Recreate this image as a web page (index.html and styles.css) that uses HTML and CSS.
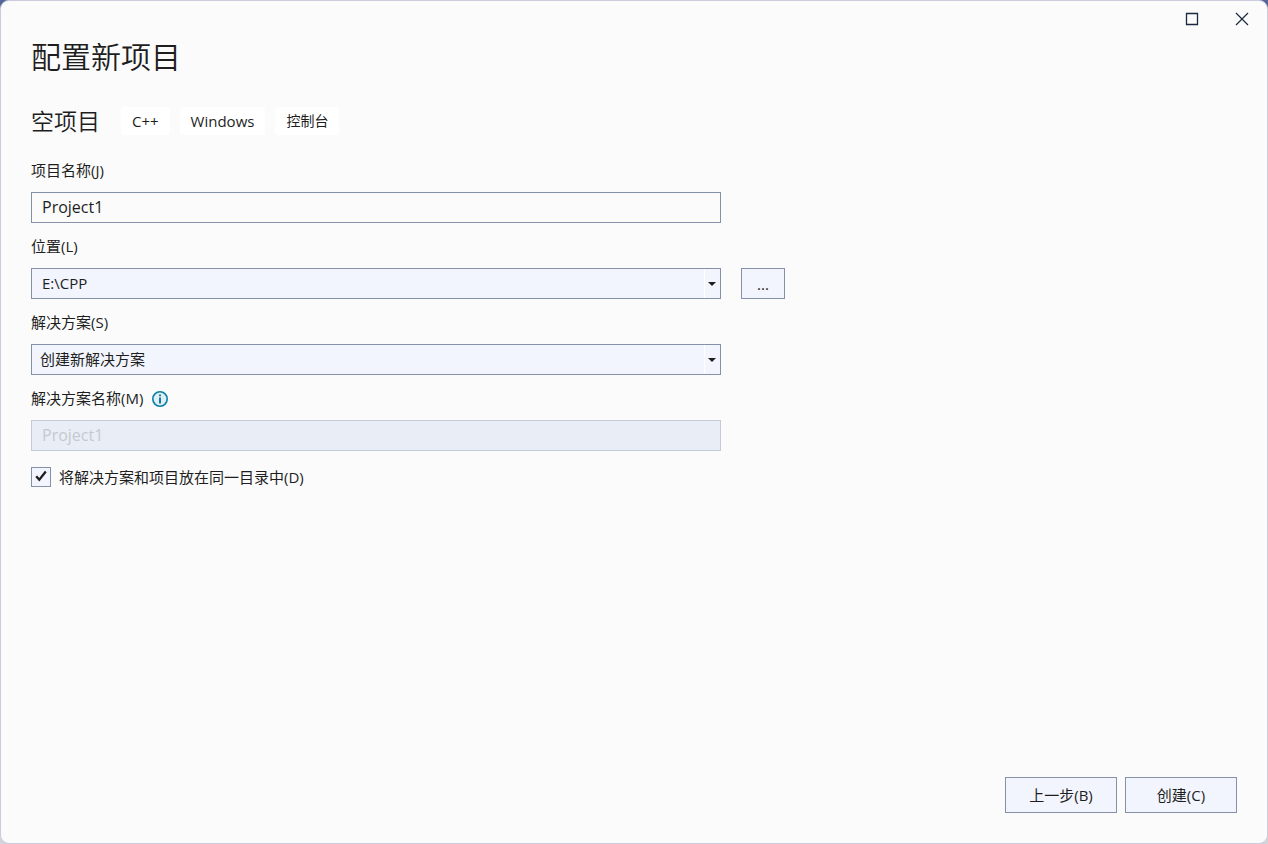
FILE: index.html
```html
<!DOCTYPE html>
<html lang="zh-CN">
<head>
    <meta charset="UTF-8">
    <meta name="viewport" content="width=device-width, initial-scale=1.0">
    <title>配置新项目</title>
    <link rel="stylesheet" href="styles.css">
</head>
<body>

    <div class="window">
        <!-- Window buttons -->
        <div class="title-bar">
            <button class="window-button" type="button" aria-label="最大化">
                <svg width="14" height="14" viewBox="0 0 14 14"><path d="M1.5 1.5h11v11h-11z" fill="none" stroke="#1b2a41" stroke-width="1.3"/></svg>
            </button>
            <button class="window-button" type="button" aria-label="关闭">
                <svg width="14" height="14" viewBox="0 0 14 14"><path d="M1 1l12 12M13 1L1 13" fill="none" stroke="#1b2a41" stroke-width="1.2"/></svg>
            </button>
        </div>

        <form class="content">
            <h1>配置新项目</h1>

            <div class="template">
                <h2>空项目</h2>
                <ul class="tags">
                    <li>C++</li>
                    <li>Windows</li>
                    <li class="tag-cjk">控制台</li>
                </ul>
            </div>

            <div class="field">
                <label for="projectName">项目名称(J)</label>
                <input class="box" type="text" id="projectName" value="Project1">
            </div>

            <div class="field">
                <label for="location">位置(L)</label>
                <div class="field-row">
                    <div class="combo">
                        <select class="box" id="location">
                            <option>E:\CPP</option>
                        </select>
                        <svg class="arrow" width="8" height="4" viewBox="0 0 8 4"><path d="M0 0h8L4 4z" fill="#1e1e1e"/></svg>
                    </div>
                    <button class="browse" type="button">...</button>
                </div>
            </div>

            <div class="field">
                <label for="solution">解决方案(S)</label>
                <div class="combo">
                    <select class="box solution-select" id="solution">
                        <option>创建新解决方案</option>
                    </select>
                    <svg class="arrow" width="8" height="4" viewBox="0 0 8 4"><path d="M0 0h8L4 4z" fill="#1e1e1e"/></svg>
                </div>
            </div>

            <div class="field">
                <div class="label-row">
                    <label for="solutionName">解决方案名称(M)</label>
                    <svg width="16" height="16" viewBox="0 0 16 16">
                        <circle cx="8" cy="8" r="7.2" fill="#e2eef3" stroke="#0a7ea4" stroke-width="1.6"/>
                        <path d="M7 3.5h2v1.8H7zM7 6.5h2v6H7z" fill="#0a7ea4"/>
                    </svg>
                </div>
                <input class="box" type="text" id="solutionName" value="Project1" disabled>
            </div>

            <div class="check-row">
                <span class="check">
                    <input type="checkbox" id="sameDirectory" checked>
                    <svg width="12" height="12" viewBox="0 0 12 12"><path d="M1.2 6.2l3.1 3.6L10.8 1.5" fill="none" stroke="#1e1e1e" stroke-width="2.3"/></svg>
                </span>
                <label for="sameDirectory">将解决方案和项目放在同一目录中(D)</label>
            </div>

            <div class="actions">
                <button type="button">上一步(B)</button>
                <button type="submit">创建(C)</button>
            </div>
        </form>
    </div>

</body>
</html>
```

FILE: styles.css
```css
* {
    margin: 0;
    padding: 0;
    box-sizing: border-box;
}

body {
    background: linear-gradient(#56669a 50%, #d4d4da 50%);
    color: #1e1e1e;
    font-family: "Open Sans", "Noto Sans CJK SC", sans-serif;
    font-size: 15px;
    line-height: 20px;
}

button, input, select {
    font: inherit;
    color: inherit;
}

.window {
    display: flex;
    flex-direction: column;
    min-height: 100vh;
    background: #fbfbfb;
    border: 1px solid #ccccdd;
    border-radius: 9px;
}

/* Window buttons */
.title-bar {
    display: flex;
    justify-content: flex-end;
    height: 36px;
}

.window-button {
    display: flex;
    align-items: center;
    justify-content: center;
    width: 50px;
    height: 36px;
    background: none;
    border: none;
}

.content {
    flex: 1;
    display: flex;
    flex-direction: column;
    padding: 0 30px 30px;
}

h1 {
    font-size: 30px;
    font-weight: 350;
    line-height: 40px;
}

.template {
    display: flex;
    align-items: center;
    gap: 21px;
    margin-top: 29px;
    margin-bottom: 25px;
}

h2 {
    font-size: 23px;
    font-weight: 350;
    line-height: 30px;
}

.tags {
    display: flex;
    gap: 10px;
    list-style: none;
}

.tags li {
    padding: 4px 11px;
    background: #fff;
    border-radius: 4px;
}

.tags .tag-cjk {
    font-size: 14px;
}

/* Form fields */
.field {
    display: flex;
    flex-direction: column;
    gap: 12px;
    margin-bottom: 14px;
    width: 100%;
    max-width: 690px;
}

.field-row {
    display: flex;
    gap: 20px;
}

.label-row {
    display: flex;
    align-items: center;
    gap: 9px;
}

label {
    line-height: 19px;
}

.box {
    width: 100%;
    height: 31px;
    padding: 0 10px;
    background: #fbfbfb;
    border: 1px solid #8591a8;
}

input.box {
    padding-bottom: 2px;
    font-size: 16px;
}

.box:disabled {
    background: #e9eef6;
    border-color: #c5cad8;
    color: #c5c9d0;
}

.combo {
    position: relative;
    flex: none;
    width: 100%;
}

.combo .box {
    appearance: none;
    padding-bottom: 2px;
    background: linear-gradient(#fff, #fff) right 15px top / 1px 100% no-repeat #f2f5fd;
}

.combo .solution-select {
    padding-left: 8px;
}

.arrow {
    position: absolute;
    top: 14px;
    right: 5px;
    pointer-events: none;
}

.browse {
    flex: none;
    width: 44px;
}

.browse, .actions button {
    background: #f2f5fd;
    border: 1px solid #8591a8;
}

.check-row {
    display: flex;
    align-items: center;
    gap: 8px;
    margin-top: 2px;
}

.check {
    position: relative;
    display: flex;
}

.check input {
    appearance: none;
    width: 20px;
    height: 20px;
    background: #f2f5fd;
    border: 1px solid #8591a8;
}

.check svg {
    position: absolute;
    top: 3px;
    left: 4px;
    visibility: hidden;
    pointer-events: none;
}

.check input:checked + svg {
    visibility: visible;
}

.actions {
    display: flex;
    justify-content: flex-end;
    gap: 8px;
    margin-top: auto;
}

.actions button {
    width: 112px;
    height: 36px;
}
```
